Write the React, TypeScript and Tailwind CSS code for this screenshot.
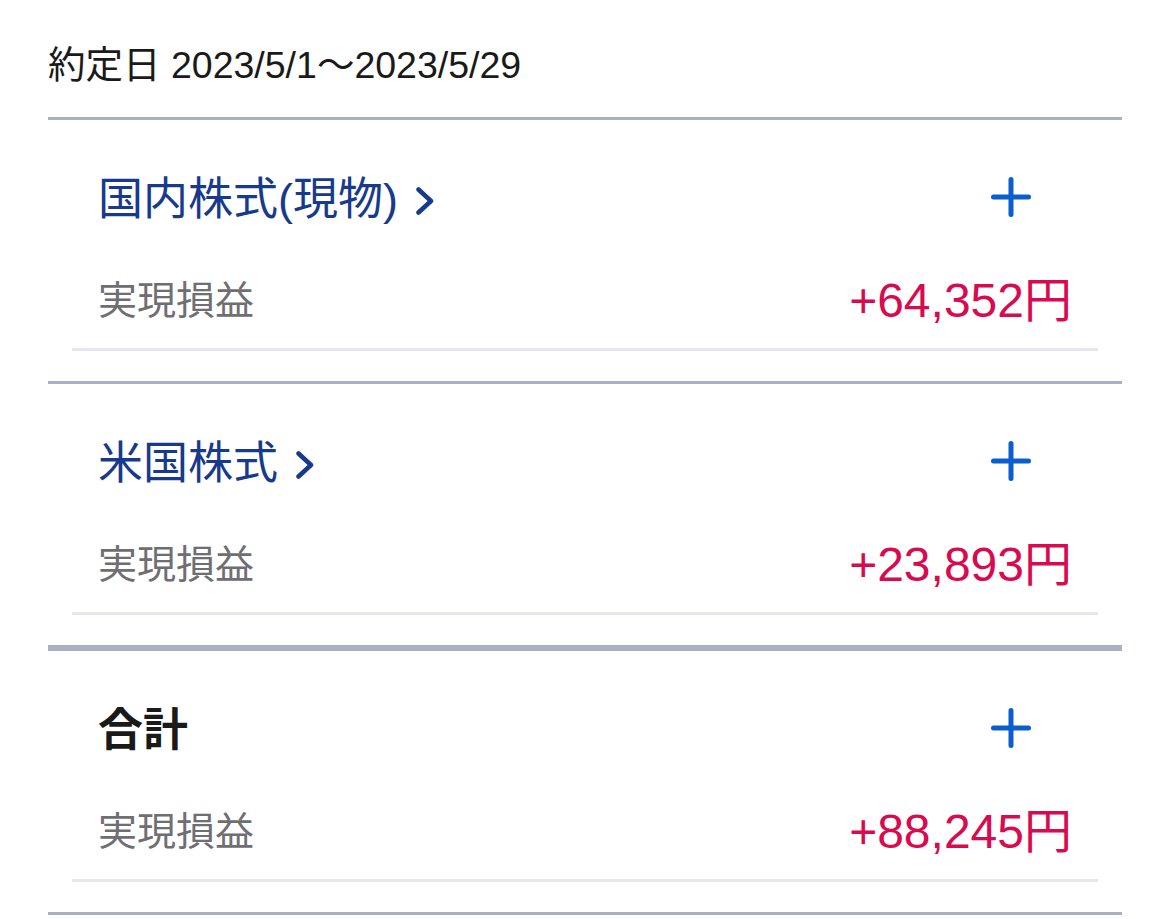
import React from "react";

const FONT = "'Liberation Sans', 'Noto Sans CJK JP', sans-serif";

function Plus() {
  return (
    <svg width="40" height="40" viewBox="0 0 40 40" className="mr-[41px] mb-[6px] shrink-0">
      <path d="M20 2.5 V37.5 M2.5 20 H37.5" stroke="#0b5fcc" strokeWidth="5" strokeLinecap="round" fill="none" />
    </svg>
  );
}

function Chevron() {
  return (
    <svg width="18" height="28" viewBox="0 0 18 28" className="ml-[18px] mt-[2px] shrink-0">
      <path d="M2.5 2.5 L15 14 L2.5 25.5" stroke="#173a8c" strokeWidth="4.5" strokeLinecap="round" strokeLinejoin="round" fill="none" />
    </svg>
  );
}

function Section({
  title,
  link,
  total,
  amount,
  thick,
}: {
  title: string;
  link?: boolean;
  total?: boolean;
  amount: string;
  thick?: boolean;
}) {
  return (
    <div className={thick ? "border-b-[6px] border-[#a9b0c3]" : "border-b-[3px] border-[#a9b0c3]"}>
      <div className="mx-[24px] h-[261px] pt-[56px]">
        <div className="flex items-center justify-between pl-[26px] pr-[26px] h-[48px]">
          <div className="flex items-center">
            <span
              className={
                total
                  ? "text-[45px] leading-[48px] font-bold text-[#1a1a1a]"
                  : "text-[45px] leading-[48px] text-[#173a8c]"
              }
            >
              {title}
            </span>
            {link && <Chevron />}
          </div>
          <Plus />
        </div>
        <div className="flex items-center justify-between pl-[26px] pr-[26px] mt-[53px] h-[48px]">
          <span className="text-[39px] leading-[48px] text-[#6e6e73]">実現損益</span>
          <span className="text-[48px] leading-[48px] text-[#d80a50]">{amount}</span>
        </div>
        <div className="mt-[23px] border-b-[3px] border-[#e6e6ee]" />
      </div>
    </div>
  );
}

export default function App() {
  return (
    <div className="w-[1170px] h-[919px] bg-white overflow-hidden" style={{ fontFamily: FONT }}>
      <div className="px-[48px]">
        <div className="pt-[44px] h-[117px]">
          <span className="text-[37.5px] leading-[43px] text-[#1a1a1a]">約定日 2023/5/1〜2023/5/29</span>
        </div>
        <div className="border-t-[3px] border-[#a9b0c3]">
          <Section title="国内株式(現物)" link amount="+64,352円" />
          <Section title="米国株式" link amount="+23,893円" thick />
          <Section title="合計" total amount="+88,245円" />
        </div>
      </div>
    </div>
  );
}
